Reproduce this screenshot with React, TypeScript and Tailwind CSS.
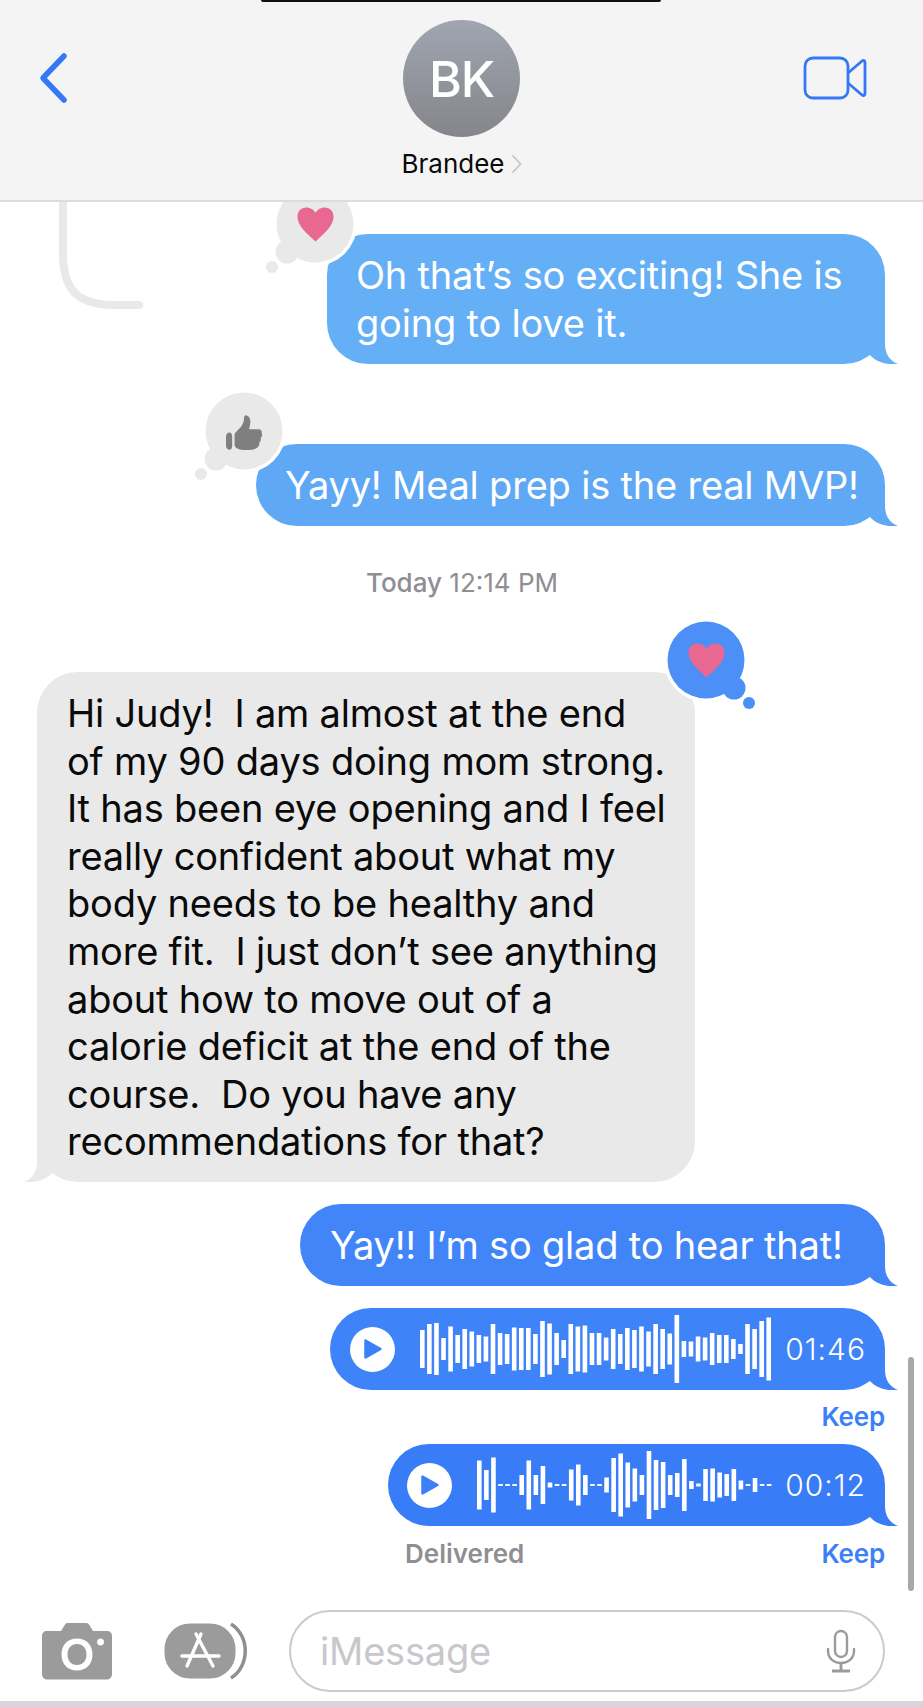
import React from "react";

const font = { fontFamily: "Inter, 'Liberation Sans', sans-serif" };

const wave1 = [38,50,52,22,45,28,40,35,28,25,50,32,30,43,42,42,30,56,51,32,18,50,45,47,32,32,23,40,30,42,38,45,35,50,40,31,68,16,15,25,23,32,28,28,20,10,50,40,56,63];
const wave2 = [49,30,55,2,2,2,20,49,20,38,5,2,2,31,41,20,2,2,15,54,63,45,33,20,68,50,46,20,24,52,8,3,32,33,25,22,32,9,2,14,2,2];

function Tail({ color, left = false }: { color: string; left?: boolean }) {
  return (
    <svg
      width="40"
      height="42"
      viewBox="-26 -42 40 42"
      className={left ? "absolute bottom-0 left-[-14px] -scale-x-100" : "absolute bottom-0 right-[-14px]"}
    >
      <path d="M-26 -41L0 -41L0 -20C0 -10 5 -3 13 0C6 1 -7 0 -15 -9L-26 -5Z" fill={color} />
    </svg>
  );
}

function Wave({ data, width }: { data: number[]; width: number }) {
  return (
    <svg width={width} height="70" viewBox={`0 0 ${width} 70`} className="shrink-0">
      {data.map((h, i) => (
        <rect key={i} x={i * 7.07} y={35 - h / 2} width="4.6" height={h} fill="#ffffff" />
      ))}
    </svg>
  );
}

function Play() {
  return (
    <div className="w-[45px] h-[45px] rounded-full bg-white flex items-center justify-center shrink-0">
      <svg width="20" height="22" viewBox="0 0 20 22">
        <path d="M2.5 2.5L17.500 11L2.5 19.500Z" fill="#3b80f8" stroke="#3b80f8" strokeWidth="2.5" strokeLinejoin="round" />
      </svg>
    </div>
  );
}

function Bubble({ className, tail, children }: { className: string; tail: string; children: React.ReactNode }) {
  return (
    <div className={`relative self-end whitespace-pre text-white text-[38px] leading-[47.5px] tracking-[-0.2px] rounded-[41px] ${className}`}>
      <Tail color={tail} />
      {children}
    </div>
  );
}

function Reaction({ className, fill, children, flip = false }: { className: string; fill: string; children: React.ReactNode; flip?: boolean }) {
  return (
    <div className={`absolute w-[90px] h-[100px] ${className}`}>
      <svg width="90" height="100" viewBox="0 0 90 100" className={flip ? "-scale-x-100" : ""}>
        <circle cx="50" cy="40" r="42" fill="#ffffff" />
        <circle cx="50" cy="40" r="38.500" fill={fill} />
        <circle cx="22" cy="68" r="11.500" fill={fill} />
        <circle cx="7" cy="83" r="6" fill={fill} />
      </svg>
      {children}
    </div>
  );
}

function Heart({ className }: { className: string }) {
  return (
    <svg width="37" height="35" viewBox="0 0 37 35" className={`absolute ${className}`}>
      <path d="M18.500 34.500C8 25 0.500 18 0.500 9.500C0.500 3.500 5 0.500 9.500 0.500C13.500 0.500 16.800 2.800 18.500 5.800C20.200 2.800 23.500 0.500 27.500 0.500C32 0.500 36.500 3.500 36.500 9.500C36.500 18 29 25 18.500 34.500Z" fill="#e96891" />
    </svg>
  );
}

export default function App() {
  return (
    <div style={font} className="relative w-[923px] h-[1707px] overflow-hidden bg-white flex flex-col">
      <header className="relative z-10 h-[202px] shrink-0 bg-[#f4f4f4] border-b-2 border-[#dcdcdc] flex flex-col items-center">
        <div className="absolute top-0 left-[261px] w-[400px] h-[2px] rounded-b-[4px] bg-[#111111]" />
        <svg width="32" height="52" viewBox="0 0 32 52" className="absolute left-[37px] top-[52px]">
          <path d="M27 4L6 26L27 48" fill="none" stroke="#3478f6" strokeWidth="5.5" strokeLinecap="round" strokeLinejoin="round" />
        </svg>
        <svg width="64" height="44" viewBox="0 0 64 44" className="absolute left-[803px] top-[56px]">
          <rect x="2" y="2" width="43" height="40" rx="8" fill="none" stroke="#3478f6" strokeWidth="2.8" />
          <path d="M45 17L59 5C60.500 4 62 4.500 62 6.500V37.500C62 39.500 60.500 40 59 39L45 27" fill="none" stroke="#3478f6" strokeWidth="2.8" strokeLinejoin="round" />
        </svg>
        <div className="mt-[20px] w-[117px] h-[117px] rounded-full bg-gradient-to-b from-[#a0a5b0] to-[#85868b] flex items-center justify-center pt-[2px] text-white text-[50px] font-medium tracking-[-1px]">
          BK
        </div>
        <div className="mt-[10px] flex items-center gap-[6px] text-[#0a0a0a] text-[26px] leading-[34px]">
          <span>Brandee</span>
          <svg width="11" height="20" viewBox="0 0 11 20">
            <path d="M1.500 1.500L9.500 10L1.500 18.500" fill="none" stroke="#c6c6c8" strokeWidth="1.8" />
          </svg>
        </div>
      </header>

      <main className="relative flex-1 flex flex-col pr-[38px]">
        <svg width="100" height="115" viewBox="0 0 100 115" className="absolute left-[55px] top-0">
          <path d="M8 0V50C8 86 20 103 60 103H84" fill="none" stroke="#e9e9e9" strokeWidth="8" strokeLinecap="round" />
        </svg>

        <Bubble className="mt-[32px] w-[558px] h-[130px] bg-[#64aff6] pl-[29px] pt-[18px]" tail="#64aff6">
          <span className="relative">{"Oh that’s so exciting! She is\ngoing to love it."}</span>
          <Reaction className="left-[-62px] top-[-50px]" fill="#e9e9e9">
            <Heart className="left-[32px] top-[23px]" />
          </Reaction>
        </Bubble>

        <Bubble className="mt-[80px] w-[629px] h-[82px] bg-[#5ea8f5] pl-[29px] pt-[18px]" tail="#5ea8f5">
          <span className="relative">{"Yayy! Meal prep is the real MVP!"}</span>
          <Reaction className="left-[-62px] top-[-53px]" fill="#e9e9e9">
            <svg width="42" height="38" viewBox="0 0 42 40" className="absolute left-[30px] top-[24px]">
              <path d="M1 23C1 20 3 18.500 4.500 18.500C6.500 18.500 7.500 20 7.500 23V32C7.500 35 6.500 36.500 4.500 36.500C3 36.500 1 35 1 32Z" fill="#7f7f7f" />
              <path d="M10 21C10 18 14 16 17 12C19 9 20 7 20 3C20 1 21.500 0 23 0.500C26 1.500 27 5 26.500 9C26.200 11.500 25.500 13.500 25.500 15H35C38 15 39 17 38.500 19C39.500 21 39 23 37.500 24C38 26 37.500 28 36 29C36.500 31 35.500 34 33 35C30 37 22 37 17 36.500C13 36 10 34 10 31Z" fill="#7f7f7f" />
            </svg>
          </Reaction>
        </Bubble>

        <div className="mt-[42px] self-center ml-[39px] h-[30px] text-[#8e8e93] text-[26px] leading-[30px]">
          <span className="font-medium">Today</span> 12:14 PM
        </div>

        <div className="relative mt-[74px] ml-[37px] w-[658px] h-[510px] rounded-[41px] bg-[#e9e9e9] pl-[30px] pt-[18px] whitespace-pre text-[#0a0a0a] text-[38px] leading-[47.6px] tracking-[-0.2px]">
          {"Hi Judy!  I am almost at the end\nof my 90 days doing mom strong.\nIt has been eye opening and I feel\nreally confident about what my\nbody needs to be healthy and\nmore fit.  I just don’t see anything\nabout how to move out of a\ncalorie deficit at the end of the\ncourse.  Do you have any\nrecommendations for that?"}
          <Tail color="#e9e9e9" left />
          <Reaction className="left-[629px] top-[-52px]" fill="#4b8ff7" flip>
            <Heart className="left-[22px] top-[23px]" />
          </Reaction>
        </div>

        <Bubble className="mt-[22px] w-[585px] h-[82px] bg-[#4285f8] pl-[30px] pt-[18px]" tail="#4285f8">
          <span className="relative">{"Yay!! I’m so glad to hear that!"}</span>
        </Bubble>

        <div className="relative mt-[22px] self-end w-[555px] h-[82px] rounded-[41px] bg-[#3f83f8] flex items-center pl-[20px]">
          <Tail color="#3f83f8" />
          <div className="relative flex items-center w-full">
            <Play />
            <div className="ml-[25px]">
              <Wave data={wave1} width={353} />
            </div>
            <span className="ml-auto mr-[19px] text-white text-[30px] tracking-[1px] font-light">01:46</span>
          </div>
        </div>

        <div className="self-end mt-[14px] h-[26px] text-[#3b80f6] text-[26px] leading-[26px] font-semibold tracking-[-0.2px]">Keep</div>

        <div className="relative mt-[14px] self-end w-[497px] h-[82px] rounded-[41px] bg-[#387cf7] flex items-center pl-[19px]">
          <Tail color="#387cf7" />
          <div className="relative flex items-center w-full">
            <Play />
            <div className="ml-[25px]">
              <Wave data={wave2} width={296} />
            </div>
            <span className="ml-auto mr-[19px] text-white text-[30px] tracking-[1px] font-light">00:12</span>
          </div>
        </div>

        <div className="mt-[14px] h-[28px] flex items-center justify-between pl-[405px] text-[26px] leading-[28px] font-semibold">
          <span className="text-[#8e8e93]">Delivered</span>
          <span className="text-[#3b80f6] tracking-[-0.2px]">Keep</span>
        </div>
      </main>

      <div className="h-[92px] shrink-0 flex items-start pl-[42px] pr-[38px]">
        <svg width="70" height="57" viewBox="0 0 70 57" className="mt-[14px] shrink-0">
          <path fillRule="evenodd" d="M5 8H19L23 1.500C23.500 0.500 24.500 0 26 0H44C45.500 0 46.500 0.500 47 1.500L51 8H65C68 8 70 10 70 13V51C70 54 68 56.500 65 56.500H5C2 56.500 0 54 0 51V13C0 10 2 8 5 8ZM35 15.500C25.500 15.500 19.500 22 19.500 31.500C19.500 41 25.500 47.500 35 47.500C44.500 47.500 50.500 41 50.500 31.500C50.500 22 44.500 15.500 35 15.500ZM35 21C41 21 44.500 25.500 44.500 31.500C44.500 37.500 41 42 35 42C29 42 25.500 37.500 25.500 31.500C25.500 25.500 29 21 35 21ZM58.500 15.500C56.500 15.500 55 17 55 19C55 21 56.500 22.500 58.500 22.500C60.500 22.500 62 21 62 19C62 17 60.500 15.500 58.500 15.500Z" fill="#9b9b9b" />
        </svg>
        <svg width="86" height="58" viewBox="0 0 86 58" className="ml-[51px] mt-[13px] shrink-0">
          <path d="M68 2C87 14 87 44 68 56" fill="none" stroke="#8f8f8f" strokeWidth="3.5" />
          <rect x="0" y="0" width="74" height="58" rx="27" fill="#9b9b9b" stroke="#ffffff" strokeWidth="3" />
          <g fill="none" stroke="#ffffff" strokeWidth="3.4" strokeLinecap="round">
            <path d="M38 12L24 44" />
            <path d="M33 12L50 44" />
            <path d="M19 34H56" />
          </g>
        </svg>
        <div className="ml-[40px] mt-[1px] w-[596px] h-[82px] rounded-[41px] border-[2.5px] border-[#cbcbcf] flex items-center justify-between pl-[29px] pr-[27px]">
          <span className="text-[#c7c7cc] text-[38px] tracking-[-0.2px]">iMessage</span>
          <svg width="30" height="44" viewBox="0 0 30 44" className="shrink-0">
            <rect x="9" y="2" width="12" height="26" rx="6" fill="none" stroke="#9b9b9b" strokeWidth="2.4" />
            <path d="M2 20V22C2 29 7.500 34 15 34C22.500 34 28 29 28 22V20" fill="none" stroke="#9b9b9b" strokeWidth="2.4" strokeLinecap="round" />
            <path d="M15 34V41M6 42H24" fill="none" stroke="#9b9b9b" strokeWidth="2.8" />
          </svg>
        </div>
      </div>

      <div className="h-[6px] shrink-0 bg-[#d6d6dc]" />

      <div className="absolute left-[908px] top-[1357px] w-[6px] h-[234px] rounded-full bg-[#a9a9a9]" />
    </div>
  );
}
